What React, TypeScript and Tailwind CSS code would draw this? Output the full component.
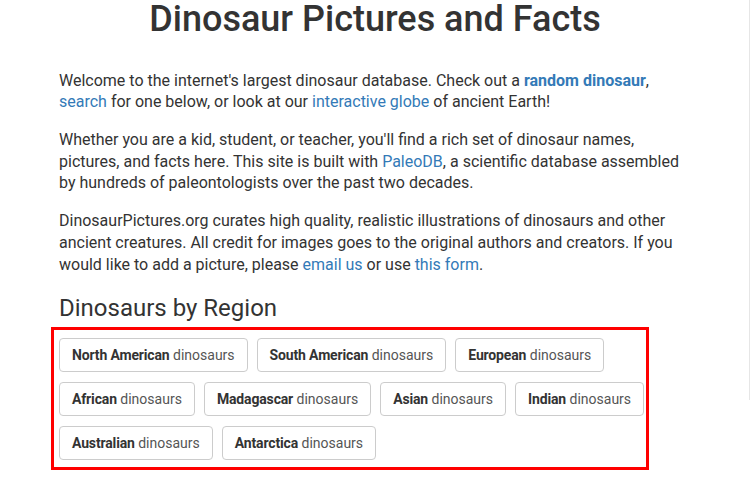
import React from 'react';

interface Region {
  name: string;
}

const regions: Region[] = [
  { name: 'North American' },
  { name: 'South American' },
  { name: 'European' },
  { name: 'African' },
  { name: 'Madagascar' },
  { name: 'Asian' },
  { name: 'Indian' },
  { name: 'Australian' },
  { name: 'Antarctica' },
];

function RegionButton({ name }: Region): React.JSX.Element {
  return (
    <a
      href="#"
      className="inline-block h-[34px] px-3 py-[6px] border border-[#ccc] rounded-[4px] bg-white text-[14px] leading-[20px] text-[#555] whitespace-nowrap"
    >
      <span className="font-bold tracking-[-0.15px] text-[#333]">{name}</span> dinosaurs
    </a>
  );
}

function App(): React.JSX.Element {
  const link = 'text-[#337ab7]';
  return (
    <div className="relative min-h-[483px] bg-white text-[#333] font-['Roboto','Liberation_Sans',sans-serif]">
      <div className="mx-auto w-[632px]">
        <h1 className="text-[36px] leading-[1.1] font-medium text-center mb-[30px]">
          Dinosaur Pictures and Facts
        </h1>

        <p className="text-[16px] leading-[21.7px] mb-4">
          Welcome to the internet's largest dinosaur database. Check out a{' '}
          <a href="#" className={`${link} font-bold`}>random dinosaur</a>,{' '}
          <a href="#" className={link}>search</a> for one below, or look at our{' '}
          <a href="#" className={link}>interactive globe</a> of ancient Earth!
        </p>

        <p className="text-[16px] leading-[21.7px] mb-4">
          Whether you are a kid, student, or teacher, you'll find a rich set of dinosaur names,
          pictures, and facts here. This site is built with{' '}
          <a href="#" className={link}>PaleoDB</a>, a scientific database assembled by hundreds of
          paleontologists over the past two decades.
        </p>

        <p className="text-[16px] leading-[21.7px] mb-4">
          DinosaurPictures.org curates high quality, realistic illustrations of dinosaurs and other
          ancient creatures. All credit for images goes to the original authors and creators. If you
          would like to add a picture, please <a href="#" className={link}>email us</a> or use{' '}
          <a href="#" className={link}>this form</a>.
        </p>

        <h2 className="mt-5 mb-[5px] text-[24px] leading-[1.1] font-normal">Dinosaurs by Region</h2>

        {/* highlighted region list */}
        <div className="-ml-[8px] w-[598px] border-[3px] border-[#ff0000] pl-[5px] pt-2 pb-[7px]">
          <div className="flex flex-wrap gap-x-[9px] gap-y-[10px]">
            {regions.map((r) => (
              <RegionButton key={r.name} name={r.name} />
            ))}
          </div>
        </div>
      </div>

      <div className="absolute right-0 top-0 w-px h-[400px] bg-[#e6e6e6]" />
    </div>
  );
}

export default App;
